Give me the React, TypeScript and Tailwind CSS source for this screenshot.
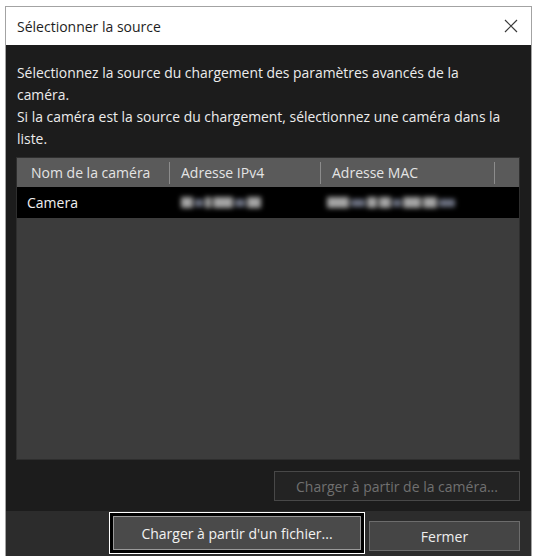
import React from "react";

const font = { fontFamily: '"Open Sans", "Noto Sans", Arial, sans-serif' };

function Blur({ widths }: { widths: number[] }) {
  return (
    <div className="flex items-center gap-[2px] blur-[2.5px]">
      {widths.map((w, i) => (
        <div
          key={i}
          className={`${i % 3 === 1 ? "h-[8px] bg-[#6b7080]" : "h-[11px] bg-[#a4a4a4]"}`}
          style={{ width: w }}
        />
      ))}
    </div>
  );
}

export default function App() {
  return (
    <div className="w-[534px] h-[556px] overflow-hidden bg-white pt-[6px] pl-[5px] pr-[2px]" style={font}>
      <div className="flex h-[560px] flex-col border border-[#a3a3a3]">
        {/* Title bar */}
        <div className="flex h-[38px] shrink-0 items-center justify-between bg-white pl-[11px] pr-[13px]">
          <span className="text-[14px] text-[#1e1e1e]">Sélectionner la source</span>
          <svg width="14" height="14" viewBox="0 0 14 14" className="text-[#3a3a3a]">
            <path d="M1 1 L13 13 M13 1 L1 13" stroke="currentColor" strokeWidth="1.2" fill="none" />
          </svg>
        </div>

        {/* Body */}
        <div className="flex shrink-0 flex-col bg-[#1c1c1c] pl-[10px] pr-[11px] pt-[17px] pb-[10px]">
          <p className="whitespace-nowrap pl-[1px] text-[13.9px] leading-[22px] text-[#ececec]">
            Sélectionnez la source du chargement des paramètres avancés de la
            <br />
            caméra.
            <br />
            Si la caméra est la source du chargement, sélectionnez une caméra dans la
            <br />
            liste.
          </p>

          {/* Camera list */}
          <div className="mt-[7px] flex h-[303px] flex-col border border-[#2e2e2e] bg-[#3c3c3c]">
            <div className="flex h-[29px] shrink-0 items-center bg-[#5a5a5a] text-[14px] text-[#e4e4e4]">
              <div className="flex h-full w-[152px] items-center pl-[14px]">Nom de la caméra</div>
              <div className="h-[22px] w-px bg-[#8c8c8c]" />
              <div className="flex h-full w-[150px] items-center pl-[11px]">Adresse IPv4</div>
              <div className="h-[22px] w-px bg-[#8c8c8c]" />
              <div className="flex h-full w-[173px] items-center pl-[11px]">Adresse MAC</div>
              <div className="h-[22px] w-px bg-[#8c8c8c]" />
              <div className="flex-1" />
            </div>
            <div className="flex h-[31px] shrink-0 items-center bg-black text-[14px] text-[#f0f0f0]">
              <div className="w-[153px] pl-[10px]">Camera</div>
              <div className="w-[151px] pl-[11px]">
                <Blur widths={[12, 8, 6, 20, 10, 14]} />
              </div>
              <div className="w-[174px] pl-[6px]">
                <Blur widths={[22, 14, 10, 12, 8, 18, 14, 16]} />
              </div>
            </div>
          </div>

          <div className="mt-[11px] flex justify-end">
            <button className="h-[30px] w-[246px] border border-[#484848] bg-[#232323] text-[14px] text-[#707070]">
              Charger à partir de la caméra...
            </button>
          </div>
        </div>

        {/* Footer */}
        <div className="flex flex-1 items-start justify-end gap-[4px] bg-[#2c2c2c] pr-[11px] pt-[1px]">
          <div className="border border-white bg-black p-[3px]">
            <button className="h-[34px] w-[248px] border border-[#9a9a9a] bg-[#4a4a4a] text-[14px] text-[#f2f2f2]">
              Charger à partir d'un fichier...
            </button>
          </div>
          <button className="mt-[9px] h-[30px] w-[151px] border border-[#6c6c6c] bg-[#454545] text-[14px] text-[#eeeeee]">
            Fermer
          </button>
        </div>
      </div>
    </div>
  );
}
